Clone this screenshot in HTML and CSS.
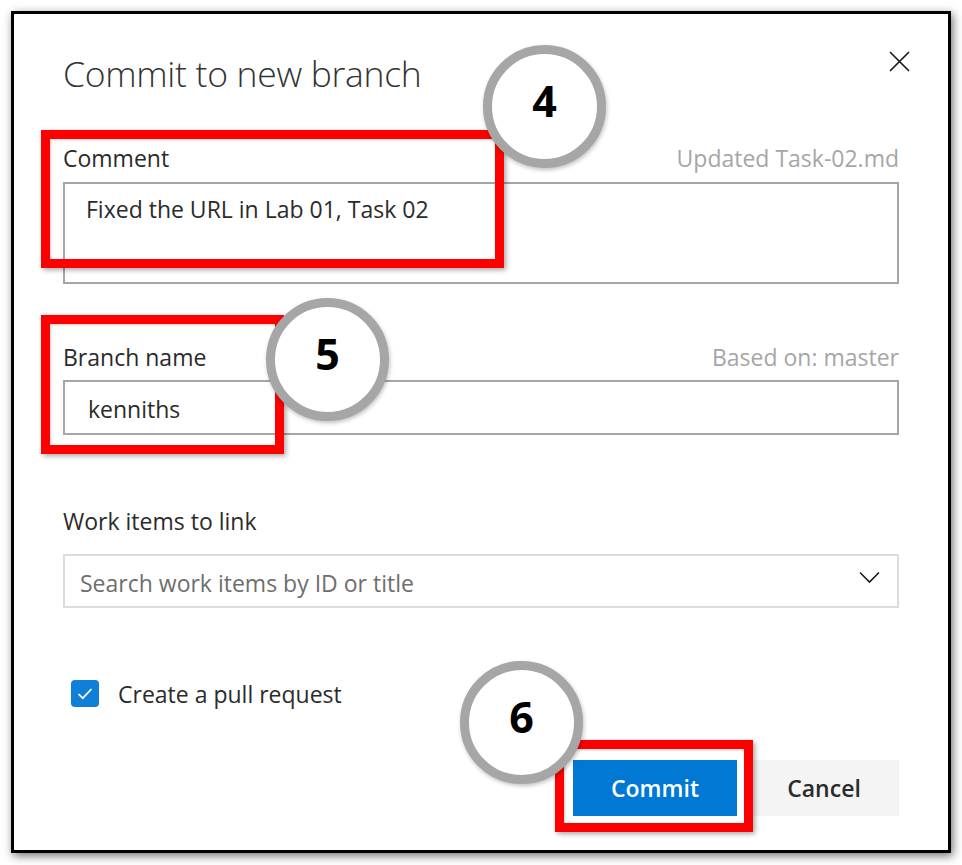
FILE: index.html
```html
<!DOCTYPE html>
<html lang="en">
<head>
<meta charset="utf-8">
<title>Commit to new branch</title>
<link rel="stylesheet" href="styles.css">
</head>
<body>
<div class="page">
  <div class="dialog">
    <div class="header">
      <h1 class="title">Commit to new branch</h1>
      <button class="close" aria-label="Close">
        <svg width="21" height="21" viewBox="0 0 21 21"><path d="M1 1 L20 20 M20 1 L1 20" stroke="#1b1b1b" stroke-width="1.7" fill="none"/></svg>
      </button>
    </div>

    <div class="field field-comment">
      <div class="label-row"><span class="label">Comment</span><span class="hint">Updated Task-02.md</span></div>
      <div class="textarea">Fixed the URL in Lab 01, Task 02</div>
    </div>

    <div class="field field-branch">
      <div class="label-row"><span class="label">Branch name</span><span class="hint">Based on: master</span></div>
      <div class="input">kenniths</div>
    </div>

    <div class="field field-work">
      <div class="label-row"><span class="label">Work items to link</span></div>
      <div class="search">
        <span class="placeholder">Search work items by ID or title</span>
        <svg class="chevron" width="21" height="13" viewBox="0 0 21 13"><path d="M1 1.5 L10.5 11 L20 1.5" stroke="#1b1b1b" stroke-width="1.6" fill="none"/></svg>
      </div>
    </div>

    <div class="check-row">
      <span class="checkbox">
        <svg width="28" height="27" viewBox="0 0 28 27"><path d="M7.5 14 L11.8 18.2 L20.5 9" stroke="#fff" stroke-width="1.7" fill="none"/></svg>
      </span>
      <span class="check-label">Create a pull request</span>
    </div>

    <div class="actions">
      <button class="btn btn-primary">Commit</button>
      <button class="btn btn-secondary">Cancel</button>
    </div>
  </div>

  <div class="mark mark-comment"></div>
  <div class="mark mark-branch"></div>
  <div class="mark mark-commit"></div>

  <div class="step step-4"><span>4</span></div>
  <div class="step step-5"><span>5</span></div>
  <div class="step step-6"><span>6</span></div>
</div>
</body>
</html>
```

FILE: styles.css
```css
html, body {
  margin: 0;
  padding: 0;
  background: #ffffff;
}

.page {
  position: relative;
  width: 962px;
  height: 865px;
  overflow: hidden;
  font-family: "Open Sans", "Liberation Sans", sans-serif;
  color: #2b2b2b;
}

.dialog {
  position: relative;
  margin: 11px 0 0 11px;
  width: 940px;
  height: 842px;
  box-sizing: border-box;
  border: 3px solid #000;
  background: #fff;
  box-shadow: 2px 3px 9px rgba(0, 0, 0, 0.55);
  padding: 32px 49px 0 49px;
  display: flex;
  flex-direction: column;
}

.header {
  display: flex;
  justify-content: space-between;
  align-items: flex-start;
  height: 52px;
}

.title {
  margin: 0;
  font-size: 35.5px;
  font-weight: 300;
  line-height: 54px;
  color: #333;
  letter-spacing: -0.3px;
}

.close {
  margin: 5px -11px 0 0;
  padding: 0;
  border: 0;
  background: none;
  width: 21px;
  height: 21px;
  display: block;
}
.close svg { display: block; }

.label-row {
  display: flex;
  justify-content: space-between;
  align-items: baseline;
  height: 30px;
  line-height: 30px;
  font-size: 23px;
}

.label { color: #2b2b2b; }
.hint { color: #a6a6a6; }

.field-comment { margin-top: 45px; }
.field-branch { margin-top: 58px; }
.field-work { margin-top: 71px; }

.textarea, .input, .search {
  box-sizing: border-box;
  font-size: 23px;
  line-height: 30px;
  color: #2b2b2b;
}

.textarea {
  margin-top: 9px;
  height: 102px;
  border: 2px solid #a6a6a6;
  padding: 10px 0 0 21px;
}

.input {
  margin-top: 8px;
  height: 55px;
  border: 2px solid #a6a6a6;
  padding: 12px 0 0 23px;
}

.search {
  margin-top: 18px;
  height: 54px;
  border: 2px solid #dcdcdc;
  padding: 12px 0 0 15px;
  display: flex;
  justify-content: space-between;
  align-items: flex-start;
}

.placeholder { color: #6e6e6e; }

.chevron {
  display: block;
  margin: 3px 17px 0 0;
}

.check-row {
  margin-top: 72px;
  margin-left: 8px;
  height: 27px;
  display: flex;
  align-items: center;
  gap: 19px;
}

.checkbox {
  width: 28px;
  height: 27px;
  border-radius: 4px;
  background: #0f7fd8;
  display: block;
}
.checkbox svg { display: block; }

.check-label {
  font-size: 23px;
  line-height: 30px;
  color: #2b2b2b;
}

.actions {
  margin-top: 53px;
  display: flex;
  justify-content: flex-end;
  gap: 12px;
}

.btn {
  height: 56px;
  border: 0;
  font-family: "Open Sans", "Liberation Sans", sans-serif;
  font-size: 23px;
  font-weight: 600;
  line-height: 30px;
  padding: 0;
}

.btn-primary {
  width: 164px;
  background: #0078d4;
  color: #fff;
}

.btn-secondary {
  width: 150px;
  background: #f4f4f4;
  color: #2b2b2b;
}

/* annotations */
.mark {
  position: absolute;
  box-sizing: border-box;
  border: 9px solid #ff0000;
  box-shadow: 2px 2px 5px rgba(0, 0, 0, 0.35), inset 1px 1px 3px rgba(0, 0, 0, 0.2);
}

.mark-comment { left: 41px; top: 130px; width: 463px; height: 138px; }
.mark-branch { left: 41px; top: 315px; width: 243px; height: 139px; }
.mark-commit { left: 555px; top: 740px; width: 198px; height: 92px; }

.step {
  position: absolute;
  box-sizing: border-box;
  width: 123px;
  height: 123px;
  border-radius: 50%;
  border: 9px solid #a6a6a6;
  background: #fff;
  box-shadow: 1px 2px 4px rgba(0, 0, 0, 0.25);
  display: flex;
  align-items: center;
  justify-content: center;
  font-family: "Open Sans", "Liberation Sans", sans-serif;
  font-weight: 700;
  font-size: 43px;
  color: #000;
}
.step span {
  display: block;
  line-height: 1;
  margin-top: -12px;
}

.step-4 { left: 483px; top: 45px; }
.step-5 { left: 266px; top: 298px; }
.step-6 { left: 460px; top: 661px; }
```
